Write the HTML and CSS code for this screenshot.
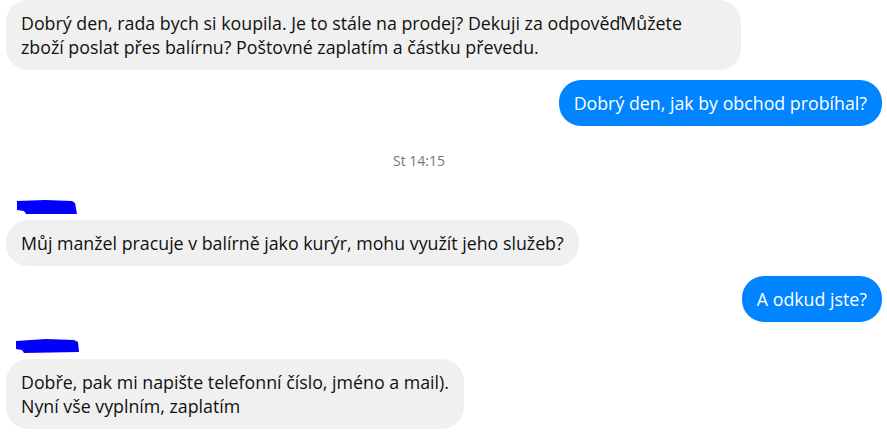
FILE: index.html
```html
<!DOCTYPE html>
<html lang="cs">
<head>
  <meta charset="UTF-8" />
  <title>Konverzace</title>
  <link rel="stylesheet" href="styles.css">
</head>
<body>
  <div class="thread">
    <div class="row in first">
      <div class="bubble">Dobrý den, rada bych si koupila. Je to stále na prodej? Dekuji za odpověďMůžete zboží poslat přes balírnu? Poštovné zaplatím a částku převedu.</div>
    </div>

    <div class="row out">
      <div class="bubble">Dobrý den, jak by obchod probíhal?</div>
    </div>

    <div class="stamp">St 14:15</div>

    <div class="name">
      <svg width="62" height="14" viewBox="0 0 62 14">
        <path d="M0 1 L28 0 L55 1 L58 3 L60 14 L9 14 L7 11 L0 10 Z" fill="#0000ff"/>
      </svg>
    </div>
    <div class="row in">
      <div class="bubble">Můj manžel pracuje v balírně jako kurýr, mohu využít jeho služeb?</div>
    </div>

    <div class="row out">
      <div class="bubble">A odkud jste?</div>
    </div>

    <div class="name second">
      <svg width="64" height="14" viewBox="0 0 64 14">
        <path d="M0 2 L30 0 L58 1 L62 3 L63 13 L8 14 L6 11 L0 10 Z" fill="#0000ff"/>
      </svg>
    </div>
    <div class="row in">
      <div class="bubble">Dobře, pak mi napište telefonní číslo, jméno a mail).<br>Nyní vše vyplním, zaplatím</div>
    </div>
  </div>
</body>
</html>
```

FILE: styles.css
```css
body {
  margin: 0;
  background: #fff;
  font-family: "Open Sans", "Noto Sans", sans-serif;
  color: #111;
  overflow: hidden;
}

.thread {
  display: flex;
  flex-direction: column;
  padding: 0 5px 0 6px;
}

.row {
  display: flex;
  margin-top: 10px;
}

.row.first {
  margin-top: 0;
}

.row.in {
  justify-content: flex-start;
}

.row.out {
  justify-content: flex-end;
}

.bubble {
  box-sizing: border-box;
  font-size: 17.8px;
  line-height: 24px;
  padding: 11px 15px;
  border-radius: 22px;
  background: #f0f0f0;
  max-width: 735px;
}

.row.out .bubble {
  background: #0084ff;
  color: #fff;
}

.stamp {
  text-align: center;
  font-size: 14px;
  color: #777;
  margin: 26px 0 0;
  padding-right: 50px;
  line-height: 18px;
}

.name {
  margin: 30px 0 0 11px;
  height: 14px;
}

.name svg {
  display: block;
}

.name + .row {
  margin-top: 6px;
}

.name.second {
  margin-top: 17px;
  margin-left: 10px;
}
```
